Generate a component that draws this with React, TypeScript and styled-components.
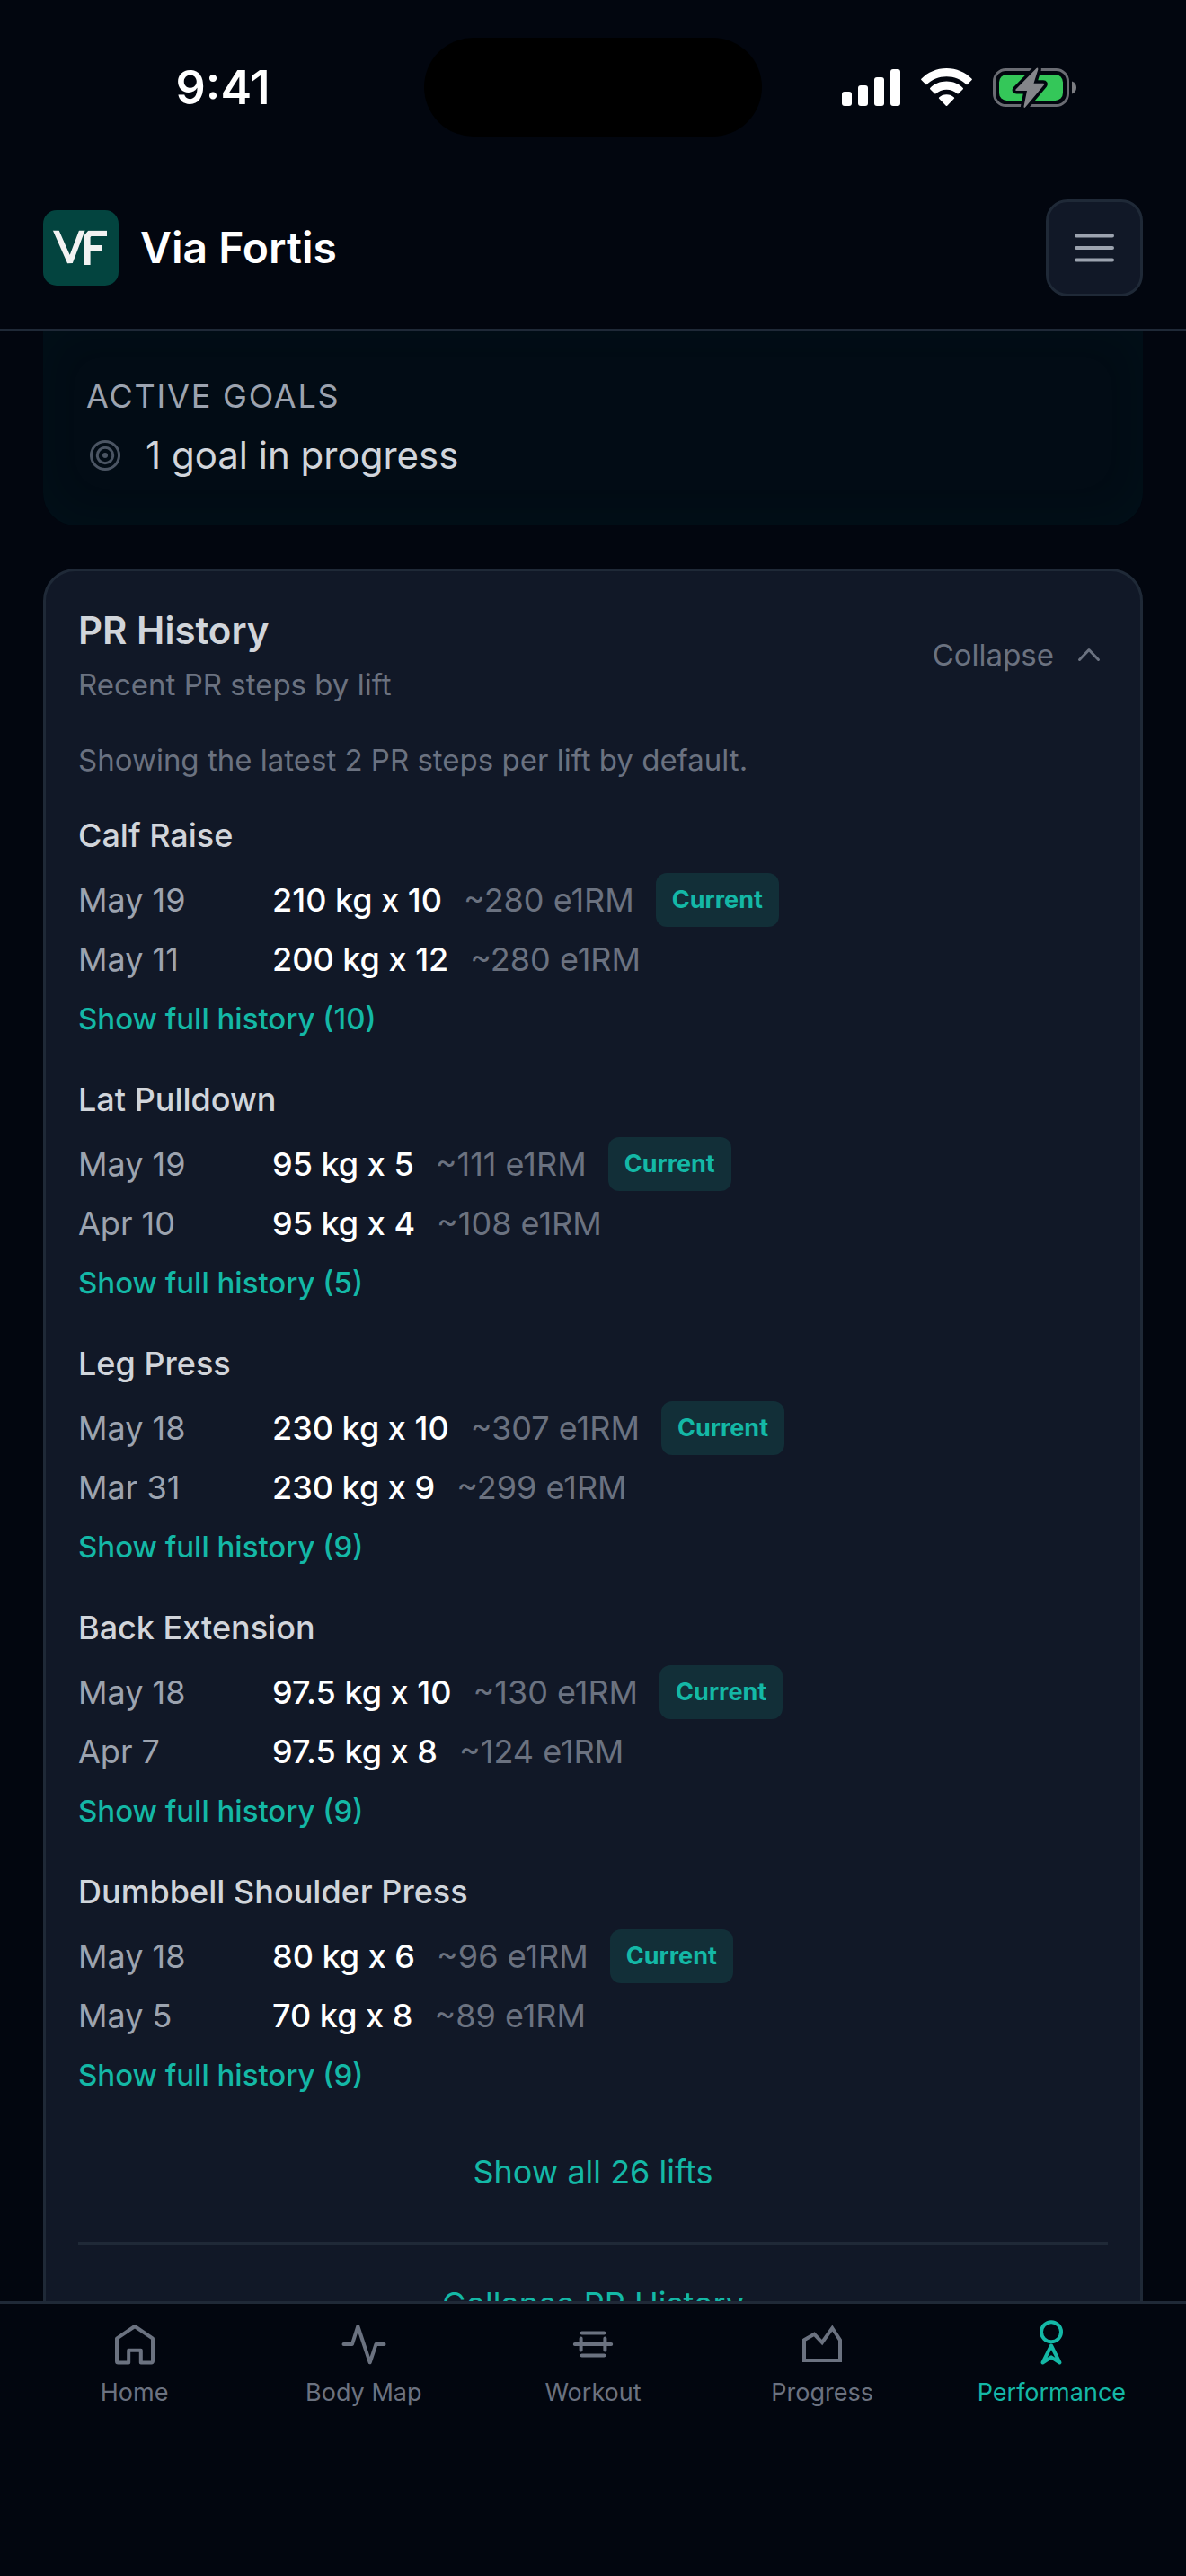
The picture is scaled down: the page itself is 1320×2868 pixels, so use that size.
import React from "react";
import styled, { createGlobalStyle } from "styled-components";

const color = {
  page: "#02060f",
  card: "#111827",
  line: "#1f2937",
  white: "#ffffff",
  strong: "#d1d5db",
  soft: "#9ca3af",
  muted: "#6b7280",
  dim: "#4b5563",
  teal: "#14b8a6",
};

const GlobalStyle = createGlobalStyle`
  *, *::before, *::after { box-sizing: border-box; }
  body {
    margin: 0;
    background: ${color.page};
    color: ${color.strong};
    font-family: Inter, "Noto Sans", sans-serif;
    font-size: 36px;
    line-height: 48px;
  }
  h1, h2, h3, p, ul { margin: 0; padding: 0; }
  ul { list-style: none; }
  button { font: inherit; color: inherit; background: none; border: 0; padding: 0; cursor: pointer; }
  a { color: inherit; text-decoration: none; }
  svg { display: block; flex: none; }
`;

const Shell = styled.div`
  display: flex;
  flex-direction: column;
  height: 100vh;
`;

const StatusBar = styled.div`
  display: grid;
  grid-template-columns: 1fr 376px 1fr;
  padding: 42px 0 34px;
`;

const StatusTime = styled.div`
  display: flex;
  align-items: center;
  justify-content: center;
  padding: 2px 0 0 24px;
  color: ${color.white};
  font-size: 52px;
  font-weight: 600;
`;

const Island = styled.div`
  height: 110px;
  border-radius: 55px;
  background: #000;
`;

const StatusIcons = styled.div`
  display: flex;
  align-items: center;
  justify-content: center;
  gap: 23px;
  padding-right: 33px;
`;

const TopBar = styled.header`
  display: flex;
  align-items: center;
  justify-content: space-between;
  padding: 36px 48px;
  border-bottom: 3px solid ${color.line};
`;

const Brand = styled.a`
  display: flex;
  align-items: center;
  gap: 24px;
`;

const LogoTile = styled.span`
  width: 84px;
  height: 84px;
  border-radius: 15px;
  background: #03443f;
`;

const BrandName = styled.h1`
  color: ${color.white};
  font-size: 48px;
  font-weight: 600;
  line-height: 60px;
`;

const MenuButton = styled.button`
  display: grid;
  place-items: center;
  width: 108px;
  height: 108px;
  border: 3px solid ${color.line};
  border-radius: 24px;
  background: ${color.card};
  color: ${color.soft};
`;

const Content = styled.main`
  flex: 1;
  min-height: 0;
  overflow-y: auto;
  scrollbar-width: none;
  display: flex;
  flex-direction: column;
  gap: 48px;
  padding: 0 48px;
`;

const GoalsCard = styled.section`
  flex: none;
  display: flex;
  flex-direction: column;
  gap: 12px;
  padding: 48px;
  border-radius: 0 0 36px 36px;
  background: #020c15;
  box-shadow: inset 0 -6px 60px rgba(20, 184, 166, 0.03);
`;

const Overline = styled.h2`
  color: ${color.soft};
  font-size: 36px;
  font-weight: 400;
  letter-spacing: 0.05em;
  text-transform: uppercase;
`;

const GoalLine = styled.p`
  display: flex;
  align-items: center;
  gap: 24px;
  font-size: 42px;
  line-height: 60px;
`;

const HistoryCard = styled.section`
  flex: none;
  padding: 36px;
  border: 3px solid ${color.line};
  border-radius: 36px;
  background: ${color.card};
`;

const CardHead = styled.div`
  display: flex;
  align-items: center;
  justify-content: space-between;
`;

const CardTitle = styled.h2`
  font-size: 42px;
  font-weight: 600;
  line-height: 60px;
  margin-bottom: 6px;
`;

const Note = styled.p`
  color: ${color.muted};
  font-size: 33px;
`;

const CollapseButton = styled.button`
  display: flex;
  align-items: center;
  gap: 18px;
  color: ${color.muted};
  font-size: 33px;
`;

const LiftList = styled.ul`
  display: flex;
  flex-direction: column;
  gap: 42px;
  margin-top: 36px;
`;

const Intro = styled(Note)`
  margin-top: 36px;
`;

const LiftName = styled.h3`
  font-size: 36px;
  font-weight: 500;
  margin-bottom: 18px;
`;

const Steps = styled.ul`
  display: flex;
  flex-direction: column;
  gap: 12px;
  margin-bottom: 18px;
`;

const Step = styled.li`
  display: grid;
  grid-template-columns: 192px auto auto auto;
  justify-content: start;
  align-items: center;
  column-gap: 24px;
`;

const StepDate = styled.span`
  color: ${color.soft};
`;

const StepSet = styled.span`
  color: ${color.white};
  font-weight: 500;
`;

const StepMax = styled.span`
  color: ${color.muted};
`;

const Badge = styled.span`
  padding: 12px 18px;
  border-radius: 12px;
  background: #122f38;
  color: ${color.teal};
  font-size: 27px;
  font-weight: 700;
  line-height: 36px;
`;

const HistoryButton = styled.button`
  display: block;
  color: ${color.teal};
  font-size: 33px;
  font-weight: 500;
`;

const WideButton = styled.button`
  display: block;
  width: 100%;
  padding: 18px 0;
  color: ${color.teal};
`;

const ShowAll = styled.div`
  padding: 42px 0 36px;
`;

const CardFoot = styled.div`
  padding-top: 24px;
  border-top: 3px solid ${color.line};
`;

const TabBar = styled.nav`
  display: grid;
  grid-template-columns: repeat(5, 1fr);
  padding: 15px 22px 186px;
  border-top: 3px solid ${color.line};
`;

const Tab = styled.a<{ $active?: boolean }>`
  display: flex;
  flex-direction: column;
  align-items: center;
  gap: 6px;
  color: ${(p) => (p.$active ? color.teal : color.muted)};
  font-size: 27px;
  line-height: 36px;
`;

const lifts = [
  {
    name: "Calf Raise",
    total: 10,
    steps: [
      { date: "May 19", set: "210 kg x 10", max: "~280 e1RM" },
      { date: "May 11", set: "200 kg x 12", max: "~280 e1RM" },
    ],
  },
  {
    name: "Lat Pulldown",
    total: 5,
    steps: [
      { date: "May 19", set: "95 kg x 5", max: "~111 e1RM" },
      { date: "Apr 10", set: "95 kg x 4", max: "~108 e1RM" },
    ],
  },
  {
    name: "Leg Press",
    total: 9,
    steps: [
      { date: "May 18", set: "230 kg x 10", max: "~307 e1RM" },
      { date: "Mar 31", set: "230 kg x 9", max: "~299 e1RM" },
    ],
  },
  {
    name: "Back Extension",
    total: 9,
    steps: [
      { date: "May 18", set: "97.5 kg x 10", max: "~130 e1RM" },
      { date: "Apr 7", set: "97.5 kg x 8", max: "~124 e1RM" },
    ],
  },
  {
    name: "Dumbbell Shoulder Press",
    total: 9,
    steps: [
      { date: "May 18", set: "80 kg x 6", max: "~96 e1RM" },
      { date: "May 5", set: "70 kg x 8", max: "~89 e1RM" },
    ],
  },
];

const TabIcon = ({ children }: { children: React.ReactNode }) => (
  <svg
    width="60"
    height="60"
    viewBox="0 0 60 60"
    fill="none"
    stroke="currentColor"
    strokeWidth="4"
    strokeLinecap="round"
    strokeLinejoin="round"
    aria-hidden="true"
  >
    {children}
  </svg>
);

const tabs = [
  {
    label: "Home",
    icon: (
      <path d="M10 23.7 30 10l20 13.7V49a1.5 1.5 0 0 1-1.5 1.5H36.8V36.7H23.2v13.8H11.5A1.5 1.5 0 0 1 10 49Z" />
    ),
  },
  { label: "Body Map", icon: <path d="M7.5 30H17l6.3-20 13.4 40.3L43.5 30h9" /> },
  {
    label: "Workout",
    icon: <path d="M9.8 30h40.4M16.6 23.4v13.2M43.4 23.4v13.2M17.6 17.6h24.8M17.6 42.4h24.8" />,
  },
  {
    label: "Progress",
    icon: <path strokeLinejoin="miter" d="M10 25.3 21.3 18.8 30 28l11.3-16L50 25.3V48H10Z" />,
  },
  {
    label: "Performance",
    active: true,
    icon: (
      <>
        <circle cx="30" cy="16.3" r="11" />
        <path d="m30 31.5 9.5 19L30 44.4l-9.5 6.1Z" />
      </>
    ),
  },
];

const SignalIcon = () => (
  <svg width="65" height="43" viewBox="0 0 65 43" fill="#fff" aria-hidden="true">
    <rect x="0" y="26" width="11" height="16" rx="3" />
    <rect x="18" y="19" width="11" height="23" rx="3" />
    <rect x="36" y="10" width="11" height="32" rx="3" />
    <rect x="54" y="1" width="11" height="41" rx="3" />
  </svg>
);

const WifiIcon = () => (
  <svg width="57" height="43" viewBox="0 0 57 43" fill="#fff" aria-hidden="true">
    <path d="M28.5 0C39.5 0 49.5 4.5 56.6 11.7Q57.2 12.4 56.6 13.1L51.6 18.1Q51 18.5 50.4 18C44.7 12.5 37 9.2 28.5 9.2S12.3 12.5 6.6 18Q6 18.5 5.4 18.1L.4 13.1Q-.2 12.4.4 11.7C7.5 4.5 17.5 0 28.5 0Z" />
    <path d="M28.5 14.6C35.8 14.6 42.2 17.4 46.8 21.9Q47.4 22.6 46.8 23.2L41.7 28.3Q41 28.9 40.4 28.3C37.3 25.5 33.2 23.7 28.5 23.7S19.7 25.5 16.6 28.3Q16 28.9 15.3 28.3L10.2 23.2Q9.6 22.6 10.2 21.9C14.8 17.4 21.2 14.6 28.5 14.6Z" />
    <path d="M28.5 29.2C31.8 29.2 34.8 30.4 36.9 32.5Q37.5 33.2 36.9 33.8L29.2 41.7Q28.5 42.3 27.8 41.7L20.1 33.8Q19.5 33.2 20.1 32.5C22.2 30.4 25.2 29.2 28.5 29.2Z" />
  </svg>
);

const BatteryIcon = () => (
  <svg width="93" height="45" viewBox="0 0 93 45" aria-hidden="true">
    <rect x="1.5" y="2.5" width="82" height="40" rx="13" fill="none" stroke="#6a6c73" strokeWidth="3" />
    <path d="M88 15.5c3 1 5 3.6 5 7s-2 6-5 7Z" fill="#7c7d82" />
    <rect x="7" y="8" width="71" height="29" rx="8.5" fill="#34c759" />
    <path
      d="M48.5 1 25.5 24.5q-1 1.5 1 1.5H38L34.5 43.5q0 2.500 2 .5L57 19.5q1-1.800-1-1.800H45.5L50.3 2.5Q50.5-.5 48.5 1Z"
      fill="#84858a"
      stroke={color.page}
      strokeWidth="7"
      strokeLinejoin="round"
      paintOrder="stroke"
    />
  </svg>
);

const Monogram = () => (
  <svg width="84" height="84" viewBox="0 0 84 84" aria-label="VF" role="img">
    <svg x="0" y="22.7" width="84" height="38.3" viewBox="0 22.7 84 38.3">
      <g fill="none" stroke="#f2f2f2">
        <polyline points="11.8,17 29.9,58 43.9,21 45.4,17" strokeWidth="6.2" strokeLinejoin="bevel" />
        <polyline points="49.3,64 49.3,29 52,25.7 71,25.7" strokeWidth="6.6" />
        <line x1="50" y1="42" x2="65.5" y2="42" strokeWidth="6" />
      </g>
    </svg>
  </svg>
);

export default function App() {
  return (
    <Shell>
      <GlobalStyle />
      <StatusBar>
        <StatusTime>9:41</StatusTime>
        <Island />
        <StatusIcons>
          <SignalIcon />
          <WifiIcon />
          <BatteryIcon />
        </StatusIcons>
      </StatusBar>

      <TopBar>
        <Brand href="#home">
          <LogoTile>
            <Monogram />
          </LogoTile>
          <BrandName>Via Fortis</BrandName>
        </Brand>
        <MenuButton type="button" aria-label="Open menu">
          <svg width="60" height="60" viewBox="0 0 60 60" stroke="currentColor" strokeWidth="4" strokeLinecap="round" aria-hidden="true">
            <path d="M10 16.5h40M10 30h40M10 43.5h40" />
          </svg>
        </MenuButton>
      </TopBar>

      <Content>
        <GoalsCard>
          <Overline>Active goals</Overline>
          <GoalLine>
            <svg width="42" height="42" viewBox="0 0 42 42" fill="none" stroke={color.dim} strokeWidth="3" aria-hidden="true">
              <circle cx="21" cy="21" r="15.5" />
              <circle cx="21" cy="21" r="8.7" />
              <circle cx="21" cy="21" r="3" fill={color.dim} stroke="none" />
            </svg>
            <span>1 goal in progress</span>
          </GoalLine>
        </GoalsCard>

        <HistoryCard>
          <CardHead>
            <div>
              <CardTitle>PR History</CardTitle>
              <Note>Recent PR steps by lift</Note>
            </div>
            <CollapseButton type="button" aria-expanded="true">
              Collapse
              <svg width="42" height="42" viewBox="0 0 42 42" fill="none" stroke="currentColor" strokeWidth="3" strokeLinecap="round" strokeLinejoin="round" aria-hidden="true">
                <path d="m10.5 26.5 10.5-11 10.5 11" />
              </svg>
            </CollapseButton>
          </CardHead>

          <Intro>Showing the latest 2 PR steps per lift by default.</Intro>

          <LiftList>
            {lifts.map((lift) => (
              <li key={lift.name}>
                <LiftName>{lift.name}</LiftName>
                <Steps>
                  {lift.steps.map((step, i) => (
                    <Step key={step.date}>
                      <StepDate>{step.date}</StepDate>
                      <StepSet>{step.set}</StepSet>
                      <StepMax>{step.max}</StepMax>
                      {i === 0 && <Badge>Current</Badge>}
                    </Step>
                  ))}
                </Steps>
                <HistoryButton type="button">Show full history ({lift.total})</HistoryButton>
              </li>
            ))}
          </LiftList>

          <ShowAll>
            <WideButton type="button">Show all 26 lifts</WideButton>
          </ShowAll>
          <CardFoot>
            <WideButton type="button">Collapse PR History</WideButton>
          </CardFoot>
        </HistoryCard>
      </Content>

      <TabBar aria-label="Main">
        {tabs.map((tab) => (
          <Tab
            key={tab.label}
            href={`#${tab.label.toLowerCase().replace(" ", "-")}`}
            $active={tab.active}
            aria-current={tab.active ? "page" : undefined}
          >
            <TabIcon>{tab.icon}</TabIcon>
            {tab.label}
          </Tab>
        ))}
      </TabBar>
    </Shell>
  );
}
